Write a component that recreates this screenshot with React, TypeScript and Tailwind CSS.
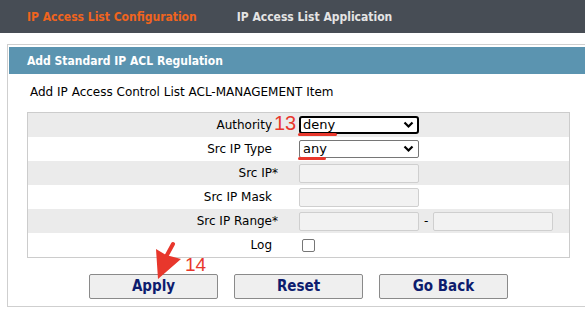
import React from 'react';

const font = { fontFamily: '"DejaVu Sans", Verdana, sans-serif' };
const bold = { fontFamily: '"DejaVu Sans Condensed", "DejaVu Sans", Verdana, sans-serif' };

function Row({ label, star, shaded, children }: { label: string; star?: boolean; shaded?: boolean; children?: React.ReactNode }) {
  return (
    <div className={`flex h-[24px] items-center ${shaded ? 'bg-[#ebebeb]' : 'bg-white'}`}>
      <div className="w-[244px] text-right text-[12px] text-black">
        {label}
        {star && <span className="inline-block w-0 text-left">*</span>}
      </div>
      <div className="flex items-center pl-[27px]">{children}</div>
    </div>
  );
}

function TextBox() {
  return <div className="h-[19px] w-[120px] rounded-[2px] border border-[#cfcfcf] bg-[#f2f2f2]" />;
}

function Chevron() {
  return (
    <svg width="11" height="8" viewBox="0 0 11 8">
      <path d="M1.5 1.5 5.5 5.5 9.5 1.5" fill="none" stroke="black" strokeWidth="2.2" />
    </svg>
  );
}

export default function App() {
  return (
    <div className="relative h-[312px] w-[585px] overflow-hidden bg-white" style={font}>
      <div className="flex h-[33px] items-center gap-[40px] bg-[#474d55] pl-[27px] text-[12px] font-bold" style={bold}>
        <span className="text-[#f0641e]">IP Access List Configuration</span>
        <span className="text-[#e4e4e4]">IP Access List Application</span>
      </div>

      <div className="ml-[7px] mt-[11px] h-[263px] w-[600px] border border-[#cfcfcf] px-[1px] pt-[2px]">
        <div className="flex h-[27px] items-center bg-[#5b94b0] pl-[18px] text-[12px] font-bold text-white" style={bold}>
          Add Standard IP ACL Regulation
        </div>
        <div className="pl-[21px] pt-[9px] text-[12px] text-black">Add IP Access Control List ACL-MANAGEMENT Item</div>

        <div className="ml-[18px] mt-[11px] w-[543px] border border-[#cccccc]">
          <Row label="Authority" shaded>
            <div className="flex h-[18px] w-[120px] items-center justify-between rounded-[3px] border-2 border-black bg-white pl-[2px] pr-[3px] text-[13px]">
              <span>deny</span>
              <Chevron />
            </div>
          </Row>
          <Row label="Src IP Type">
            <div className="flex h-[18px] w-[120px] items-center justify-between rounded-[2px] border border-[#767676] bg-white pl-[3px] pr-[4px] text-[13px]">
              <span>any</span>
              <Chevron />
            </div>
          </Row>
          <Row label="Src IP" star shaded>
            <TextBox />
          </Row>
          <Row label="Src IP Mask">
            <TextBox />
          </Row>
          <Row label="Src IP Range" star shaded>
            <TextBox />
            <span className="mx-[5px] text-[12px]">-</span>
            <TextBox />
          </Row>
          <Row label="Log">
            <div className="ml-[3px] h-[13px] w-[13px] rounded-[2px] border border-[#767676] bg-white" />
          </Row>
        </div>

        <div className="ml-[80px] mt-[16px] flex gap-[16px]">
          {['Apply', 'Reset', 'Go Back'].map((t) => (
            <button
              key={t}
              className="h-[25px] w-[129px] rounded-[2px] border border-[#8a8a8a] bg-[#efefef] text-[15px] font-bold text-[#0d1c6e]"
              style={bold}
            >
              {t}
            </button>
          ))}
        </div>
      </div>

      {/* red annotations */}
      <span className="absolute left-[274px] top-[113px] text-[20px] leading-none text-[#e8372c]" style={{ fontFamily: '"Liberation Sans", Arial, sans-serif' }}>13</span>
      <div className="absolute left-[298px] top-[133px] h-[3px] w-[39px] rounded-full bg-[#e8372c]" />
      <div className="absolute left-[298px] top-[157px] h-[3px] w-[28px] rounded-full bg-[#e8372c]" />
      <span className="absolute left-[185px] top-[255px] text-[19px] leading-none text-[#e8372c]" style={{ fontFamily: '"Liberation Sans", Arial, sans-serif' }}>14</span>
      <svg className="absolute left-[145px] top-[240px]" width="40" height="42" viewBox="0 0 40 42">
        <path d="M22 15 L28 4" stroke="#e8372c" strokeWidth="4" strokeLinecap="round" />
        <path d="M11 9 L21 15 L36 19 L13 39 Z" fill="#e8372c" />
      </svg>
    </div>
  );
}
